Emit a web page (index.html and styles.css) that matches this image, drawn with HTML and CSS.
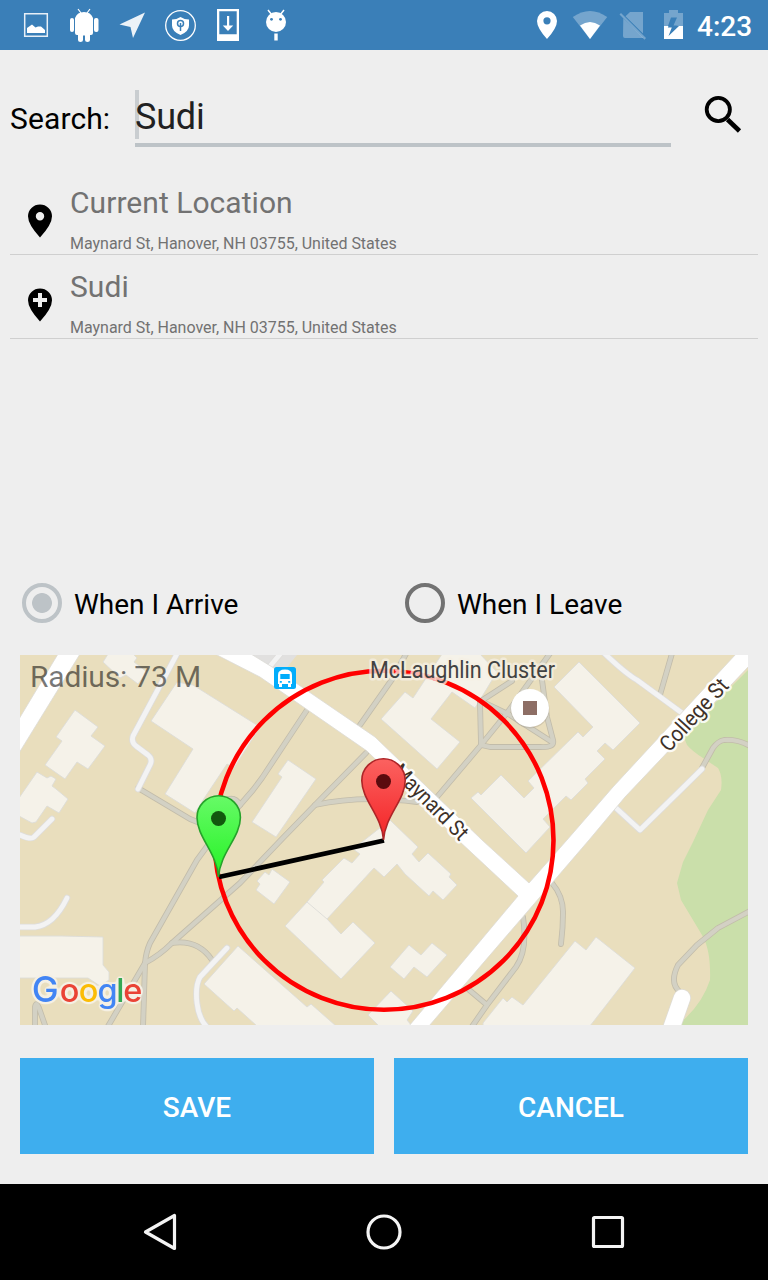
FILE: index.html
```html
<!DOCTYPE html>
<html lang="en">
<head>
<meta charset="utf-8">
<title>Location reminder</title>
<link rel="stylesheet" href="styles.css">
</head>
<body>
<div class="screen">
  <header class="status">
    <svg class="status-left" viewBox="0 0 310 50" width="310" height="50" fill="#fff">
      <g opacity=".88"><path d="M24.7 13.7h22.6v22.6H24.7z" fill="none" stroke="#fff" stroke-width="1.5"/></g>
      <path d="M27 33v-5l5-3.500 3.500 3 2.500-1h3l4 3.500v3z"/>
      <path d="M75 18a9.500 9 0 0 1 18 0v15q0 2-2 2h-1v5q0 2-2.500 2T85 40v-4.500h-2V40q0 2-2.500 2T78 40v-5h-1q-2 0-2-2z"/>
      <path d="M78 9l3 4M90 9l-3 4" stroke="#fff" stroke-width="1.200"/>
      <rect x="70" y="18" width="4" height="14" rx="2"/><rect x="94" y="18" width="4.500" height="14" rx="2"/>
      <path d="M145 12.500L133 38l-2.500-11-11-2.500z" opacity=".9"/>
      <circle cx="180.500" cy="25.500" r="14.800" fill="none" stroke="#fff" stroke-width="1.300"/>
      <path d="M180.500 17q4 2.500 8.500 2.500v6q0 6-8.500 9.500-8.500-3.500-8.500-9.500v-6q4.500 0 8.500-2.500z"/>
      <g fill="none" stroke="#3a7fb8" stroke-width="1.500"><circle cx="180.500" cy="23.500" r="3"/><path d="M180.500 23v8"/></g>
      <path fill-rule="evenodd" d="M217 9h22v32h-22zM219.300 11.300v23h17.400v-23z"/>
      <path d="M227 16h2.200v9.500h4L228 31l-5.200-5.500h4.200z"/>
      <circle cx="276" cy="22" r="10"/><path d="M268 10l4 5M284 10l-4 5" stroke="#fff" stroke-width="1.500"/>
      <circle cx="271.500" cy="19.300" r="1.400" fill="#3a7fb8"/><circle cx="280.500" cy="19.300" r="1.400" fill="#3a7fb8"/>
      <path d="M274.300 33.500h3.400v7h-3.400z"/>
    </svg>
    <svg class="status-right" viewBox="530 0 160 50" width="160" height="50" fill="#fff">
      <path fill-rule="evenodd" d="M547 11a10 10 0 0 1 10 10q0 7-10 18-10-11-10-18a10 10 0 0 1 10-10zM547 17.200a3.600 3.600 0 1 0 0 7.200 3.600 3.600 0 0 0 0-7.200z"/>
      <path opacity=".3" d="M572.800 17q17.200-12 34.400 0L590 39z"/>
      <path d="M580 25.500q10-7 20 0L590 39z"/>
      <path opacity=".3" d="M630 12h13v21.500l-17.500-17.200zM623.300 18.500l20 19.500H625q-2 0-2-2z"/>
      <path opacity=".3" d="M619.500 14.500l1.500-1.500 25 25-1.500 1.800z"/>
      <path opacity=".3" fill-rule="evenodd" d="M664 13h5v-3h9v3h5v13h-19zM671 17.500L668 26h11l-3-.5h-2.500l3.500-8z"/>
      <path fill-rule="evenodd" d="M664 26h4.500l-.7 1.500h4l-3.300 8.500 10.500-10H683v13h-19z"/>
    </svg>
    <span class="clock">4:23</span>
  </header>

  <main class="content">
    <div class="search">
      <label class="search-label">Search:</label>
      <div class="field"><span class="caret"></span><span class="field-text">Sudi</span></div>
      <svg class="search-icon" viewBox="700 90 48 48" width="48" height="48" fill="none" stroke="#000">
        <circle cx="718.300" cy="109.500" r="11.600" stroke-width="3.800"/><path d="M727.500 119.500l12 11.500" stroke-width="4.600"/>
      </svg>
    </div>

    <ul class="places">
      <li class="place">
        <svg class="place-icon" viewBox="0 0 24 34" width="24" height="34"><path fill-rule="evenodd" d="M12 .5a12 11.800 0 0 1 12 11.800q0 8.200-12 21.200-12-13-12-21.200A12 11.800 0 0 1 12 .5zM12 8a4.200 4.200 0 1 0 0 8.400A4.200 4.200 0 0 0 12 8z"/></svg>
        <div><div class="place-name">Current Location</div><div class="place-address">Maynard St, Hanover, NH 03755, United States</div></div>
      </li>
      <li class="place">
        <svg class="place-icon" viewBox="0 0 24 34" width="24" height="34"><path fill-rule="evenodd" d="M12 .5a12 11.800 0 0 1 12 11.800q0 8.200-12 21.200-12-13-12-21.200A12 11.800 0 0 1 12 .5zM10 5v5H5v4h5v5h4v-5h5v-4h-5V5z"/></svg>
        <div><div class="place-name">Sudi</div><div class="place-address">Maynard St, Hanover, NH 03755, United States</div></div>
      </li>
    </ul>

    <div class="options">
      <label class="option"><span class="radio radio-on"></span><span class="option-text">When I Arrive</span></label>
      <label class="option"><span class="radio"></span><span class="option-text">When I Leave</span></label>
    </div>

    <div class="map">
      <svg viewBox="20 655 728 370" width="728" height="370">
        <defs>
          <linearGradient id="green" x1="0" y1="0" x2="0" y2="1"><stop offset="0" stop-color="#67fa67"/><stop offset="1" stop-color="#25f325"/></linearGradient>
          <linearGradient id="red" x1="0" y1="0" x2="0" y2="1"><stop offset="0" stop-color="#fb6260"/><stop offset="1" stop-color="#f42326"/></linearGradient>
          <filter id="halo" x="-10%" y="-20%" width="120%" height="140%" color-interpolation-filters="sRGB">
            <feGaussianBlur in="SourceAlpha" stdDeviation="1.900"/>
            <feComponentTransfer result="grown"><feFuncA type="linear" slope="9" intercept="-.7"/></feComponentTransfer>
            <feFlood flood-color="#f5f0e4"/>
            <feComposite in2="grown" operator="in"/>
            <feMerge><feMergeNode/><feMergeNode in="SourceGraphic"/></feMerge>
          </filter>
          <g id="paths" fill="none" stroke-linejoin="round" stroke-linecap="round">
            <path d="M673 650L660 695"/>
            <path d="M702 768L713 748Q718 741 724 740Q738 739 750 746"/>
            <path d="M138 788L190 819 200 823"/>
            <path d="M307 710L262 778 253 790 240 805 208 845 197 860 150 943Q146 952 145 963L143 1028"/>
            <path d="M228 799Q236 797 240 805"/>
            <path d="M366 753L315 805 280 841 240 883 172 943Q160 955 145 963L107 1028"/>
            <path d="M315 805Q360 795 417 802"/>
            <path d="M172 943Q198 939 212 960"/>
            <path d="M35 1028V1007Q36 1001 39 1008L46 1028"/>
            <path d="M407 652L393 678 360 725"/>
            <path d="M437 797L481 745 507 713 551 652"/>
            <path d="M480 702L481 745 490 747H540Q555 748 553 740L547 717 542 680"/>
            <path d="M481 701L512 681M483 702L510 715 552 742"/>
            <path d="M552 883Q563 896 563 912T561 944"/>
            <path d="M523 917Q528 950 516 967L487 1005 471 1028M468 989L487 1005"/>
            <path d="M750 911L718 928 697 945 678 965Q669 983 680 992"/>
          </g>
          <g id="lanes" fill="none" stroke-linejoin="round" stroke-linecap="round">
            <path d="M178 652L133 736Q131 742 136 746L148 755Q153 759 150 765L138 789"/>
            <path d="M52 819L34 837Q31 840 20 835"/>
            <path d="M18 927H35Q54 925 67 898"/>
            <path d="M227 948L200 977Q195 986 197 1003T208 1028"/>
            <path d="M603 652Q626 674 637 680L682 713"/>
            <path d="M616 808L640 830 702 769"/>
            <path d="M281 653L271 665"/>
          </g>
        </defs>
        <path fill="#e9debd" d="M20 655h728v370H20z"/>
        <path fill="#e1e0df" d="M250 655h47l-17 21z"/>
        <path fill="#cadfaa" d="M748 670L683 735 687 745Q692 751 703 758L718 768Q723 776 721 790L708 810 693 842 683 862 677 883 681 900 702 935Q711 950 710 980Q702 1005 678 1025H748z"/>
        <g fill="#f5f2e9" stroke="#dcdcd8" stroke-width=".9">
          <path d="M103 662l5-8h25l4 4-3 4 13 10-9 12-12-9-6 3z"/>
          <path d="M75 710L98 727 91 736 105 746 88 769 77 762 65 779 45 765 62 741 56 737z"/>
          <path d="M37 772L47 778 51 776 56 779 52 786 56 789 68 799 59 813 47 806 36 822 32 823 19 816V798z"/>
          <path d="M177 682L151 721 193 749 165 794 195 813 205 797 227 764 234 768 260 727 193 685z"/>
          <path d="M288 760L316 779 276 837 252 822 282 777 278 774z"/>
          <path d="M405 692L413 698 442 654H480L497 672 475 708 452 692 431 719 460 742 437 769 381 719z"/>
          <path d="M501 775L524 798 534 788 528 781 578 732 583 737 593 727 554 687 579 662 640 723 613 750 605 743 597 751 605 759 585 779 588 783 571 800 566 796 543 819 550 827 526 853 471 798 478 792 481 795z"/>
          <path d="M390 820L418 847 412 854 419 862 428 853 451 874 449 877 457 885 443 900 433 891 429 896 405 874 397 864 384 877 374 868 327 919 341 934 353 922 375 943 341 979 285 926 307 902 324 882 322 880 344 858 352 863 360 854 353 849z"/>
          <path d="M307 902L327 919" fill="none"/>
          <path d="M272 869L290 882 274 904 256 890 260 884 257 881 265 872 269 875z"/>
          <path d="M19 936H61L103 937V965L109 972V980L100 986 88 978H19z"/>
          <path d="M238 946L307 1007 311 1004 336 1026H257L237 1008 234 1011 204 984z"/>
          <path d="M368 1015L391 991 413 1011 407 1020 412 1026H379z"/>
          <path d="M409 945L421 955 432 943 447 955 427 977 414 967 404 979 390 967z"/>
          <path d="M575 941L586 950 596 937 635 968 590 1026H483V1023L503 998 507 1002 512 997 523 1005z"/>
        </g>
        <use href="#paths" stroke="#c2bcaa" stroke-width="5.800"/>
        <use href="#paths" stroke="#d3d1c4" stroke-width="4.200"/>
        <use href="#lanes" stroke="#dedddb" stroke-width="6.500"/>
        <use href="#lanes" stroke="#f3f3f3" stroke-width="4.800"/>
        <g fill="#fff" stroke="#dcdad5" stroke-width=".8">
          <path d="M58 654H80L19 753V719z"/>
          <path d="M215 654H251L277 670 375 737 482 840 529 883 567 840 613 787 736 654H749V666L625 797 589 840 429 1026H409L518 896 458 840 367 751 260 677z"/>
        </g>
        <path d="M682 998L670 1032" stroke="#dedcd6" stroke-width="18" stroke-linecap="round"/>
        <path d="M682 998L670 1032" stroke="#fff" stroke-width="16.500" stroke-linecap="round"/>

        <circle cx="384" cy="840.300" r="169.500" fill="none" stroke="#f00" stroke-width="4.600"/>
        <path d="M219 877L384 840.500" stroke="#000" stroke-width="4.700"/>

        <rect x="274" y="667" width="22" height="22" rx="2.500" fill="#02adfb"/>
        <path fill-rule="evenodd" fill="#fff" d="M278 675q0-5.500 7-5.500t7 5.500v9h-1v3h-3v-3h-6v3h-3v-3h-1zM280.300 674v5h9.400v-5zM279.800 681v1.800h2V681zm8.400 0v1.800h2V681z"/>
        <circle cx="530" cy="709" r="19.500" fill="#a49b8b" opacity=".35"/>
        <circle cx="530" cy="708" r="19" fill="#fff"/>
        <path fill="#8d6e65" d="M523 701h14v14h-14z"/>

        <g class="map-label">
          <text x="370" y="678" textLength="185" lengthAdjust="spacingAndGlyphs">McLaughlin Cluster</text>
          <text class="street" transform="translate(391 773) rotate(45)" textLength="97" lengthAdjust="spacingAndGlyphs">Maynard St</text>
          <text class="street" transform="translate(669 753) rotate(-47.500)" textLength="90" lengthAdjust="spacingAndGlyphs">College St</text>
        </g>

        <g stroke-width="1.600">
          <path fill="url(#green)" stroke="#25a22a" d="M218.500 877C217 853 197 837 197 817.500A21.700 21.700 0 0 1 240.400 817.500C240.400 837 220 853 218.500 877z"/>
          <circle cx="218.500" cy="818.500" r="7.500" fill="#12580e"/>
          <path fill="url(#red)" stroke="#ae2528" d="M383.500 840C382 816 361.800 800 361.800 780.500A21.700 21.700 0 0 1 405.200 780.500C405.200 800 385 816 383.500 840z"/>
          <circle cx="383.500" cy="781.500" r="7.500" fill="#5b0b0e"/>
        </g>

        <text class="google" y="1001.500" filter="url(#halo)"><tspan class="google-cap" x="31.800" fill="#4285f4">G</tspan><tspan x="59.700" fill="#ea4335">o</tspan><tspan x="78.800" fill="#fbbc05">o</tspan><tspan x="97.400" fill="#4285f4">g</tspan><tspan x="116.300" fill="#34a853">l</tspan><tspan x="123.300" fill="#ea4335">e</tspan></text>
      </svg>
      <div class="radius">Radius: 73 M</div>
    </div>

    <div class="actions">
      <button class="action">SAVE</button>
      <button class="action">CANCEL</button>
    </div>
  </main>

  <nav class="navbar">
    <svg viewBox="0 0 48 48" width="48" height="48"><path d="M38.500 7.500v33L9.500 24z"/></svg>
    <svg viewBox="0 0 48 48" width="48" height="48"><circle cx="24" cy="24" r="16"/></svg>
    <svg viewBox="0 0 48 48" width="48" height="48"><rect x="9.500" y="9.500" width="29" height="29" rx="1"/></svg>
  </nav>
</div>
</body>
</html>
```
FILE: styles.css
```css
* { box-sizing: border-box; }
body { margin: 0; font-family: Roboto, sans-serif; }
.screen { width: 768px; height: 1280px; display: flex; flex-direction: column; background: #eee; overflow: hidden; }
.status { height: 50px; display: flex; align-items: center; background: #3a7fb8; color: #fff; }
.status svg { display: block; }
.status-right { margin-left: auto; }
.clock { width: 78px; padding: 2px 0 0 7px; font-size: 28px; font-weight: 500; line-height: 33px; white-space: nowrap; }
.content { flex: 1; display: flex; flex-direction: column; }
.search { display: flex; align-items: flex-start; height: 121px; padding: 40px 20px 0 10px; }
.search-label { width: 125px; padding-top: 11px; font-size: 30px; line-height: 35px; letter-spacing: .12px; color: #000; }
.field { display: flex; position: relative; width: 536px; height: 57px; border-bottom: 4px solid #bdc3c7; font-size: 36px; line-height: 53px; color: #212121; }
.caret { position: absolute; left: 0; top: 0; width: 4px; height: 49px; background: #c9cdd0; }
.field-text { position: relative; padding-top: 1px; letter-spacing: -.2px; }
.search-icon { margin-left: auto; }
.places { list-style: none; margin: 0; padding: 0 10px; height: 397px; }
.place { display: flex; height: 84px; padding-left: 18px; border-bottom: 1px solid #cfcfcf; color: #727272; }
.place-icon { margin: 33px 18px 0 0; }
.place-name { padding-top: 14px; font-size: 30px; line-height: 35px; letter-spacing: .05px; }
.place-address { padding-top: 14px; font-size: 16px; line-height: 19px; letter-spacing: -.02px; }
.options { display: flex; padding-left: 22px; height: 87px; align-items: flex-start; }
.option { flex: 0 0 383px; display: flex; align-items: center; gap: 12px; height: 70px; font-size: 28px; color: #000; }
.option:last-child { flex-basis: 363px; }
.option-text { padding-top: 2px; }
.radio { width: 40px; height: 40px; border: 4px solid #727272; border-radius: 50%; }
.radio-on { border-color: #bdc3c7; background: radial-gradient(circle, #bdc3c7 9.500px, transparent 10.300px); }
.map { position: relative; width: 728px; height: 370px; margin-left: 20px; overflow: hidden; }
.map svg { display: block; }
.radius { position: absolute; left: 10px; top: 4px; font-size: 30px; line-height: 35px; letter-spacing: -.18px; color: rgba(0, 0, 0, .54); }
.map-label { font-size: 23px; fill: #424242; stroke: rgba(245, 240, 228, .75); stroke-width: 5px; stroke-linejoin: round; paint-order: stroke; }
.street { font-size: 22px; fill: #3e3128; stroke: rgba(255, 255, 255, .85); }
.google { font-family: Inter, sans-serif; font-size: 32.5px; font-weight: 500; }
.google-cap { font-size: 36px; }
.actions { display: flex; gap: 20px; padding: 33px 20px 0; }
.action { flex: 1; height: 96px; padding: 3px 0 0; border: 0; background: #3eaeee; color: #fff; font: 500 28px Roboto, sans-serif; }
.navbar { height: 96px; display: flex; justify-content: center; align-items: center; gap: 176px; background: #000; }
.navbar svg { fill: none; stroke: #f4f4f4; stroke-width: 3.200; stroke-linejoin: round; }
```
